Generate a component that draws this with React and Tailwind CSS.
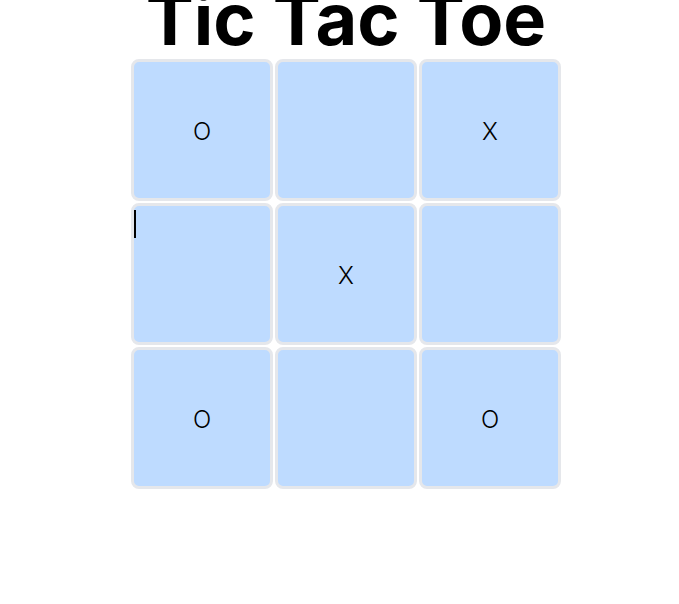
import React from 'react';

const board = ['O', '', 'X', '', 'X', '', 'O', '', 'O'];

const Cell = ({value, caret}) => (
    <div className="relative flex items-center justify-center w-[142px] h-[142px] pt-1 bg-blue-200 border-[3px] border-gray-200 rounded-lg text-2xl font-light text-black">
        {caret && <span className="absolute left-0 top-[4px] w-[2px] h-[28px] bg-black" />}
        {value}
    </div>
);

const App = () => {
    return (
        <div className="flex flex-col items-center pl-[13px] font-['Inter',sans-serif]">
            <h1 className="text-7xl font-bold leading-none mt-[-17px] mb-[4px]">Tic Tac Toe</h1>
            <div className="grid grid-cols-3 gap-[2px]">
                {board.map((v, i) => (
                    <Cell key={i} value={v} caret={i === 3} />
                ))}
            </div>
        </div>
    );
};

export default App;
